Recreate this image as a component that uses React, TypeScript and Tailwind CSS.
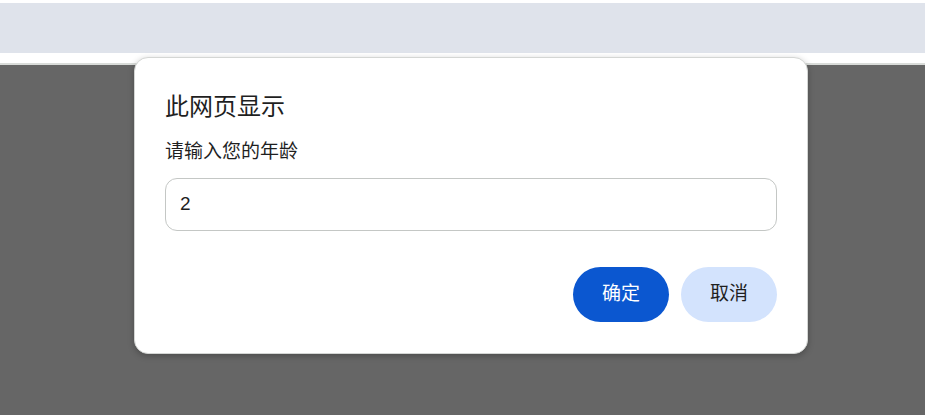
export default function App() {
  return (
    <div className="relative h-[415px] w-[925px] overflow-hidden bg-white font-['Liberation_Sans','Noto_Sans_CJK_SC',sans-serif]">
      <div className="mt-[3px] h-[50px] bg-[#dfe3eb]" />
      <div className="h-[10px] bg-white" />
      <div className="h-[2px] bg-[#d9dcd9]" />
      <div className="h-[350px] bg-[#666666]" />

      <div className="absolute left-[134px] top-[57px] flex h-[297px] w-[674px] flex-col rounded-[14px] border border-[#d4d6d4] bg-white px-[30px] pt-[34px] shadow-[0_2px_6px_rgba(0,0,0,0.25)]">
        <h1 className="text-[24px] leading-[30px] text-[#1f1f1f]">此网页显示</h1>
        <p className="mt-[18px] text-[19px] leading-[24px] text-[#1f1f1f]">请输入您的年龄</p>
        <div className="mt-[14px] flex h-[53px] items-center rounded-[12px] border border-[#c4c7c5] px-[14px] text-[19px] text-[#1f1f1f]">
          2
        </div>
        <div className="mt-[36px] flex justify-end gap-[12px]">
          <button className="h-[55px] w-[96px] rounded-full bg-[#0b57d0] text-[19px] text-white">确定</button>
          <button className="h-[55px] w-[96px] rounded-full bg-[#d3e3fd] text-[19px] text-[#1f1f1f]">取消</button>
        </div>
      </div>
    </div>
  );
}
